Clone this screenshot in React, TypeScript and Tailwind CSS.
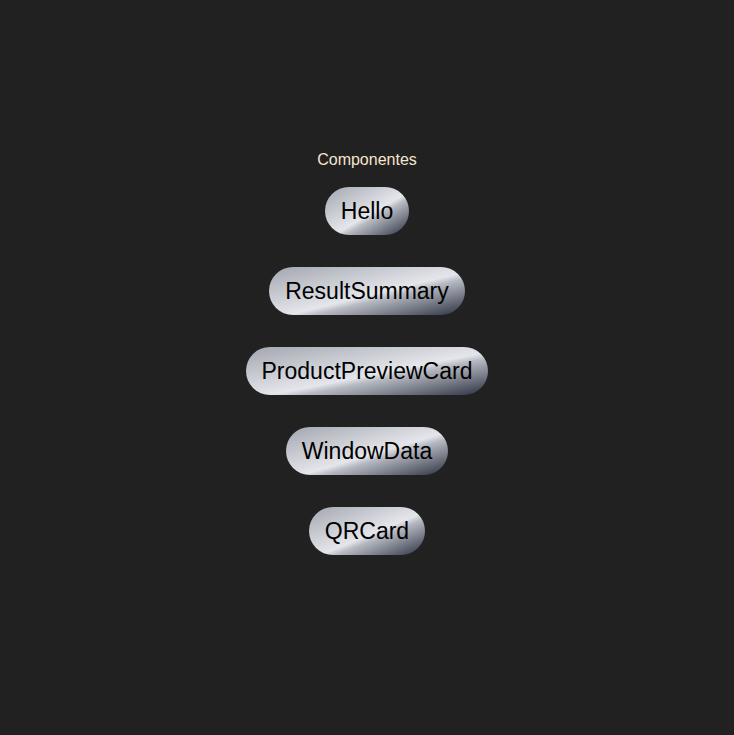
import React from "react";

const items = ["Hello", "ResultSummary", "ProductPreviewCard", "WindowData", "QRCard"];

export default function App() {
  return (
    <div className="min-h-[735px] w-full bg-[#212121] flex flex-col items-center pt-[150px]" style={{ fontFamily: "'Liberation Sans', Arial, sans-serif" }}>
      <h1 className="text-[16px] leading-[20px] text-[#f5e6cf] font-normal">Componentes</h1>
      <div className="mt-[17px] flex flex-col items-center gap-[32px]">
        {items.map((t) => (
          <button
            key={t}
            className="h-[48px] px-4 rounded-full text-[23px] leading-[27px] text-black bg-[linear-gradient(to_bottom_right,#a3a6af_0%,#e4e6eb_55%,#b6b9c1_62%,#2b3040_100%)]"
          >
            {t}
          </button>
        ))}
      </div>
    </div>
  );
}
